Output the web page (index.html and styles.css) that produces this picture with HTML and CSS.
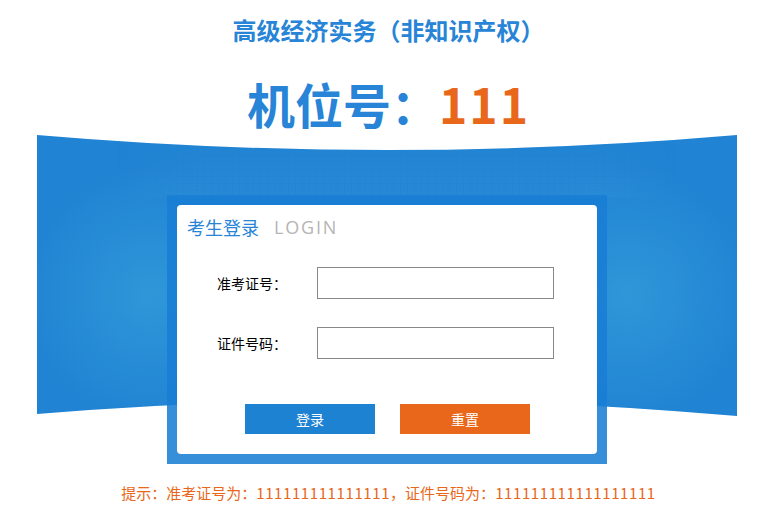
FILE: index.html
```html
<!DOCTYPE html>
<html lang="zh-CN">
<head>
<meta charset="utf-8">
<title>考生登录</title>
<link rel="stylesheet" href="styles.css">
</head>
<body>
<div class="page">
  <h1 class="subject">高级经济实务（非知识产权）</h1>
  <div class="seat">机位号：<span class="seat-no">111</span></div>
  <div class="stage">
    <svg class="banner" viewBox="0 0 700 282" width="700" height="282" aria-hidden="true">
      <defs>
        <radialGradient id="spotL" cx="113" cy="160" r="130" gradientUnits="userSpaceOnUse">
          <stop offset="0" stop-color="#3199d9" stop-opacity="0.9"/>
          <stop offset="1" stop-color="#3199d9" stop-opacity="0"/>
        </radialGradient>
        <radialGradient id="spotR" cx="590" cy="160" r="130" gradientUnits="userSpaceOnUse">
          <stop offset="0" stop-color="#3199d9" stop-opacity="0.9"/>
          <stop offset="1" stop-color="#3199d9" stop-opacity="0"/>
        </radialGradient>
        <pattern id="grid" width="7" height="7" patternUnits="userSpaceOnUse">
          <path d="M7 0V7M0 7H7" stroke="#1a76c6" stroke-width="0.8" fill="none"/>
        </pattern>
        <linearGradient id="fadeV" x1="0" y1="0" x2="0" y2="1">
          <stop offset="0" stop-color="#fff" stop-opacity="0.1"/>
          <stop offset="1" stop-color="#fff" stop-opacity="0.8"/>
        </linearGradient>
        <linearGradient id="fadeH" x1="0" y1="0" x2="1" y2="0">
          <stop offset="0" stop-color="#fff" stop-opacity="0"/>
          <stop offset="0.15" stop-color="#fff" stop-opacity="1"/>
          <stop offset="0.85" stop-color="#fff" stop-opacity="1"/>
          <stop offset="1" stop-color="#fff" stop-opacity="0"/>
        </linearGradient>
        <mask id="maskV">
          <rect x="80" y="8" width="560" height="54" fill="url(#fadeV)"/>
        </mask>
        <mask id="maskH">
          <rect x="80" y="8" width="560" height="54" fill="url(#fadeH)"/>
        </mask>
        <clipPath id="shape">
          <path d="M0 0 Q350 30 700 0 L700 281 Q350 250 0 279 Z"/>
        </clipPath>
      </defs>
      <g clip-path="url(#shape)">
        <rect width="700" height="282" fill="#2083d3"/>
        <g mask="url(#maskH)">
          <g mask="url(#maskV)">
            <rect x="80" y="8" width="560" height="54" fill="#2e8fd9" opacity="0.7"/>
            <rect x="80" y="8" width="560" height="54" fill="url(#grid)" opacity="0.45"/>
          </g>
        </g>
        <rect width="700" height="282" fill="url(#spotL)"/>
        <rect width="700" height="282" fill="url(#spotR)"/>
      </g>
    </svg>
    <div class="frame">
      <form class="card">
        <div class="card-head">
          <span class="head-cn">考生登录</span>
          <span class="head-en">LOGIN</span>
        </div>
        <div class="row">
          <label class="label" for="zkz">准考证号：</label>
          <input class="field" id="zkz" type="text">
        </div>
        <div class="row">
          <label class="label" for="zjh">证件号码：</label>
          <input class="field" id="zjh" type="text">
        </div>
        <div class="actions">
          <button class="btn btn-login" type="button">登录</button>
          <button class="btn btn-reset" type="button">重置</button>
        </div>
      </form>
    </div>
  </div>
  <p class="tip">提示：准考证号为：<span class="num">111111111111111</span>，证件号码为：<span class="num">111111111111111111</span></p>
</div>
</body>
</html>
```

FILE: styles.css
```css
* { box-sizing: border-box; }

html, body {
  margin: 0;
  padding: 0;
  background: #fff;
}

body {
  font-family: "Noto Sans CJK SC", "Noto Sans", sans-serif;
  color: #000;
}

.page {
  width: 777px;
  height: 513px;
  overflow: hidden;
  display: flex;
  flex-direction: column;
  align-items: center;
}

.subject {
  margin: 13px 0 0;
  font-size: 24px;
  line-height: 34px;
  font-weight: bold;
  color: #2784d6;
}

.seat {
  margin-top: 28px;
  font-size: 48px;
  line-height: 56px;
  font-weight: bold;
  color: #2784d6;
}

.seat-no {
  color: #e8671b;
  letter-spacing: 2px;
}

.stage {
  position: relative;
  width: 777px;
  height: 330px;
  margin-top: 4px;
  display: flex;
  justify-content: center;
}

.banner {
  position: absolute;
  left: 37px;
  top: 0;
  display: block;
}

.frame {
  position: relative;
  margin-top: 60px;
  margin-left: -3px;
  width: 440px;
  height: 269px;
  padding: 10px;
  background: rgba(24, 126, 212, 0.866);
}

.card {
  margin: 0;
  height: 249px;
  background: #fff;
  border-radius: 4px;
  padding: 10px 0 0 10px;
  display: flex;
  flex-direction: column;
}

.card-head {
  display: flex;
  align-items: center;
  gap: 15px;
  height: 24px;
  font-size: 18px;
  line-height: 24px;
}

.head-cn {
  color: #2784d6;
}

.head-en {
  color: #b5b5b5;
  letter-spacing: 1.8px;
  font-family: "Open Sans", "Noto Sans", sans-serif;
}

.row {
  display: flex;
  align-items: center;
  margin-top: 28px;
  padding-left: 30px;
}

.label {
  width: 100px;
  font-size: 14px;
  line-height: 20px;
  color: #000;
}

.field {
  width: 237px;
  height: 32px;
  margin: 0;
  border: 1px solid #888;
  border-radius: 0;
  padding: 0 6px;
  font-size: 14px;
  background: #fff;
  outline: none;
}

.actions {
  display: flex;
  gap: 25px;
  margin-top: 45px;
  padding-left: 58px;
}

.btn {
  width: 130px;
  height: 30px;
  margin: 0;
  border: none;
  border-radius: 0;
  font-family: "Noto Sans CJK SC", sans-serif;
  font-size: 14px;
  color: #fff;
  cursor: pointer;
  padding: 0;
}

.btn-login { background: #1e82d2; }
.btn-reset { background: #e8671b; }

.tip {
  margin: 18px 0 0;
  font-size: 15px;
  line-height: 20px;
  color: #e8671b;
  white-space: nowrap;
}

.tip .num {
  letter-spacing: 0.6px;
}
```
